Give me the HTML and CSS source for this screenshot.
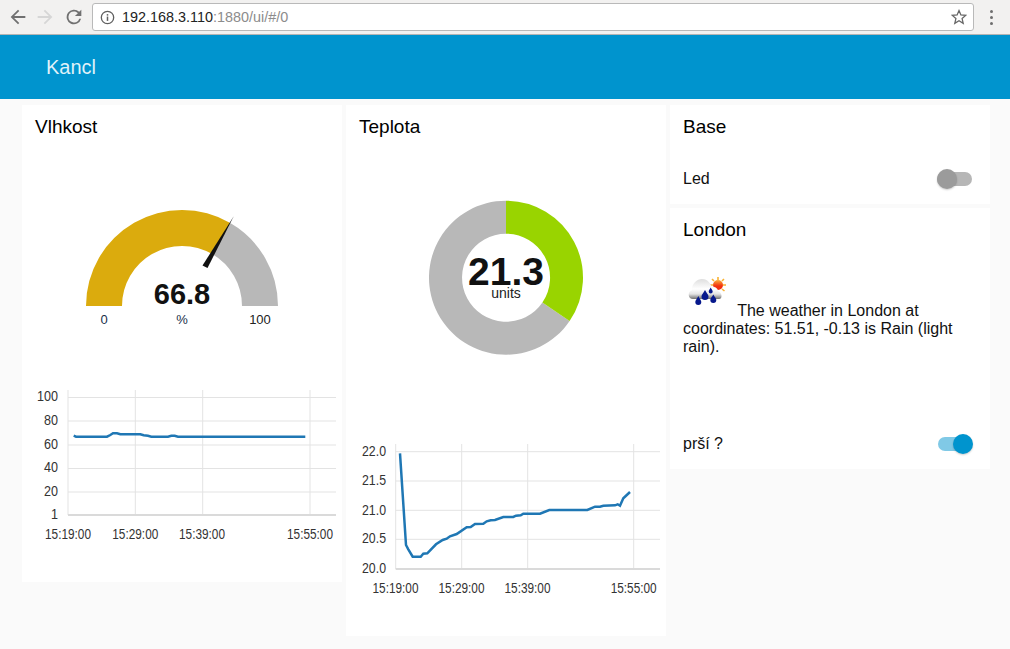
FILE: index.html
```html
<!DOCTYPE html>
<html lang="cs">
<head>
  <meta charset="UTF-8">
  <meta name="viewport" content="width=device-width, initial-scale=1.0">
  <title>Kancl</title>
  <link rel="stylesheet" href="styles.css">
</head>
<body>
  <div class="toolbar">
    <svg class="nav-icon" viewBox="0 0 24 24"><path class="ico-dark" d="M20 11H7.8l5.6-5.6L12 4l-8 8 8 8 1.4-1.4L7.8 13H20z"/></svg>
    <svg class="nav-icon" viewBox="0 0 24 24"><path class="ico-faint" d="M4 11h12.2l-5.6-5.6L12 4l8 8-8 8-1.4-1.4 5.6-5.6H4z"/></svg>
    <svg class="nav-icon" viewBox="0 0 24 24"><path class="ico-dark" d="M17.65 6.35A8 8 0 1 0 19.73 14h-2.08A6 6 0 1 1 12 6c1.66 0 3.14.69 4.22 1.78L13 11h7V4z"/></svg>
    <div class="urlbar">
      <svg class="info-icon" viewBox="0 0 16 16">
        <circle cx="8" cy="8" r="6.6" fill="none" stroke="#5f5f5f" stroke-width="1.4"/>
        <rect x="7.2" y="7" width="1.6" height="4.6" fill="#5f5f5f"/>
        <rect x="7.2" y="4.4" width="1.6" height="1.6" fill="#5f5f5f"/>
      </svg>
      <span class="url"><span class="url-host">192.168.3.110</span>:1880/ui/#/0</span>
      <svg class="star-icon" viewBox="0 0 16 16"><path d="M8 1.6l1.9 4.4 4.8.4-3.6 3.2 1.1 4.7L8 11.8l-4.2 2.5 1.1-4.7-3.6-3.2 4.8-.4z" fill="none" stroke="#666" stroke-width="1.3"/></svg>
    </div>
    <div class="menu-dots"><i></i><i></i><i></i></div>
  </div>

  <header class="header">Kancl</header>

  <main class="dashboard">
    <section class="card">
      <h2 class="card-title">Vlhkost</h2>
      <svg class="plot plot-gauge1" viewBox="22 149 320 231">
        <path class="gold" d="M86 306A96 96 0 0 1 230.3 223L212.2 254.1A60 60 0 0 0 122 306Z"/>
        <path class="gray" d="M230.3 223A96 96 0 0 1 278 306H242A60 60 0 0 0 212.2 254.1Z"/>
        <path class="needle" d="M202.500 265.500L207.500 268L233.600 216.600Z"/>
        <text class="gauge-value" x="182" y="304">66.8</text>
        <text class="gauge-label navy" x="104" y="324">0</text>
        <text class="gauge-label navy" x="182" y="324">%</text>
        <text class="gauge-label" x="260" y="324">100</text>
      </svg>
      <svg class="plot plot-chart1" viewBox="22 380 320 202">
        <path class="grid" d="M68 397.5H336M68 421H336M68 445H336M68 468.500H336M68 492H336M68 390V515M135.300 390V515M202.700 390V515M310 390V515"/>
        <path class="axis" d="M68 515H336"/>
        <polyline class="series" points="73.700,435.700 76,436.700 107,436.700 110.300,435 113,433.300 117,433.300 120.300,434.300 140.300,434.300 143.700,435.300 148,435.700 151.300,436.700 168,436.700 171.300,435.700 174.700,435.700 178,436.700 305.300,436.700"/>
        <text class="tick-y" x="58" y="401" textLength="21" lengthAdjust="spacingAndGlyphs">100</text>
        <text class="tick-y" x="58" y="425" textLength="14" lengthAdjust="spacingAndGlyphs">80</text>
        <text class="tick-y" x="58" y="449" textLength="14" lengthAdjust="spacingAndGlyphs">60</text>
        <text class="tick-y" x="58" y="472" textLength="14" lengthAdjust="spacingAndGlyphs">40</text>
        <text class="tick-y" x="58" y="496" textLength="14" lengthAdjust="spacingAndGlyphs">20</text>
        <text class="tick-y" x="58" y="519" textLength="7" lengthAdjust="spacingAndGlyphs">1</text>
        <text class="tick-x" x="68" y="539" textLength="46" lengthAdjust="spacingAndGlyphs">15:19:00</text>
        <text class="tick-x" x="135.300" y="539" textLength="46" lengthAdjust="spacingAndGlyphs">15:29:00</text>
        <text class="tick-x" x="202" y="539" textLength="46" lengthAdjust="spacingAndGlyphs">15:39:00</text>
        <text class="tick-x" x="310" y="539" textLength="46" lengthAdjust="spacingAndGlyphs">15:55:00</text>
      </svg>
    </section>

    <section class="card">
      <h2 class="card-title">Teplota</h2>
      <svg class="plot plot-gauge2" viewBox="346 149 320 281">
        <path class="gray" d="M506 200.700A77 77 0 1 0 569.600 321.100L542.400 302.500A44 44 0 1 1 506 233.700Z"/>
        <path class="green" d="M506 200.700A77 77 0 0 1 569.600 321.100L542.400 302.500A44 44 0 0 0 506 233.700Z"/>
        <text class="donut-value" x="506" y="285">21.3</text>
        <text class="donut-unit" x="506" y="298">units</text>
      </svg>
      <svg class="plot plot-chart2" viewBox="346 430 320 206">
        <path class="grid" d="M395.700 451.700H660M395.700 481H660M395.700 510.300H660M395.700 539.300H660M395.700 444V569M461.700 444V569M527.700 444V569M633.700 444V569"/>
        <path class="axis" d="M395.700 569H660"/>
        <polyline class="series" points="400,453.300 406,545 408.300,549.300 412.700,556.700 420.700,556.700 423.300,553.700 427.300,553.300 436,544.300 442.700,540 446.700,538.700 450,536.300 456.700,534 466.700,527.300 470.700,527 475,524 483.300,523.700 486.700,521.300 490.700,520.300 495,520 503.300,517 513.300,517 516,515.700 520.700,515.300 523.300,513.700 540,513.700 549.300,510 587.300,510 595,506.700 600,506.700 603.300,505.700 615,505.300 617.700,504.300 620,505.700 623.300,498.300 630,492"/>
        <text class="tick-y" x="386" y="456" textLength="24" lengthAdjust="spacingAndGlyphs">22.0</text>
        <text class="tick-y" x="386" y="485" textLength="24" lengthAdjust="spacingAndGlyphs">21.5</text>
        <text class="tick-y" x="386" y="514.500" textLength="24" lengthAdjust="spacingAndGlyphs">21.0</text>
        <text class="tick-y" x="386" y="543" textLength="24" lengthAdjust="spacingAndGlyphs">20.5</text>
        <text class="tick-y" x="386" y="573" textLength="24" lengthAdjust="spacingAndGlyphs">20.0</text>
        <text class="tick-x" x="395.500" y="593" textLength="46" lengthAdjust="spacingAndGlyphs">15:19:00</text>
        <text class="tick-x" x="461.500" y="593" textLength="46" lengthAdjust="spacingAndGlyphs">15:29:00</text>
        <text class="tick-x" x="527.500" y="593" textLength="46" lengthAdjust="spacingAndGlyphs">15:39:00</text>
        <text class="tick-x" x="633.700" y="593" textLength="46" lengthAdjust="spacingAndGlyphs">15:55:00</text>
      </svg>
    </section>

    <div class="stack">
      <section class="card card-base">
        <h2 class="card-title">Base</h2>
        <div class="row">
          <span>Led</span>
          <span class="switch"></span>
        </div>
      </section>

      <section class="card card-london">
        <h2 class="card-title">London</h2>
        <p class="weather">
          <svg class="weather-icon" viewBox="0 0 50 50">
            <defs>
              <linearGradient id="cloudFill" x1="0" y1="0" x2="0" y2="1">
                <stop offset="0" stop-color="#dedede"/>
                <stop offset="0.5" stop-color="#fff"/>
                <stop offset="0.75" stop-color="#e4e4e4"/>
                <stop offset="1" stop-color="#6f6f6f"/>
              </linearGradient>
              <linearGradient id="sunFill" x1="0" y1="0" x2="0" y2="1">
                <stop offset="0" stop-color="#fbb03b"/>
                <stop offset="0.6" stop-color="#f2300f"/>
              </linearGradient>
            </defs>
            <g stroke="#f9b233" stroke-width="1.6">
              <path d="M35 11V14M27 19H30M43 19H40M29 13L31 15M41 13L39 15M41.500 25L39 23"/>
            </g>
            <circle cx="35" cy="19" r="5" fill="url(#sunFill)"/>
            <path d="M10 33C5 33 4 26 9 24 9 17 14 13 19 13 25 13 28 18 28.500 21 32 20 35 23 35 25 39 26 40 33 36 33Z" fill="url(#cloudFill)"/>
            <path class="drop" d="M15.300 30C14 33 12.300 34 12.300 36A3 3 0 0 0 18.300 36C18.300 34 16.600 33 15.300 30Z"/>
            <path class="drop" d="M22 24C20.500 27 18.500 28.500 18.500 30.500A3.500 3.500 0 0 0 25.500 30.500C25.500 28.500 23.500 27 22 24Z"/>
            <path class="drop" d="M27.700 21.500C26.800 23.500 25.700 24.300 25.700 25.500A2 2 0 0 0 29.700 25.500C29.700 24.300 28.600 23.500 27.700 21.500Z"/>
            <path class="drop" d="M30.300 28.500C29 31 27.300 32.300 27.300 34A3 3 0 0 0 33.300 34C33.300 32.300 31.600 31 30.300 28.500Z"/>
          </svg>
          The weather in London at coordinates: 51.51, -0.13 is Rain (light rain).
        </p>
        <div class="row row-rain">
          <span>prší ?</span>
          <span class="switch switch-on"></span>
        </div>
      </section>
    </div>
  </main>
</body>
</html>
```

FILE: styles.css
```css
html, body {
  height: 100%;
}
body {
  margin: 0;
  background: #fafafa;
  font-family: "Liberation Sans", Arial, sans-serif;
  color: #111;
  overflow: hidden;
}

/* browser chrome */
.toolbar {
  display: flex;
  align-items: center;
  height: 34px;
  padding-left: 7px;
  background: #f2f1f0;
  border-bottom: 1px solid #b4b4b4;
}
.nav-icon {
  width: 22px;
  height: 22px;
  margin-right: 5px;
}
.nav-icon:nth-child(2) {
  margin-right: 7px;
}
.nav-icon:nth-child(3) {
  margin-right: 0;
}
.ico-dark {
  fill: #707070;
}
.ico-faint {
  fill: #d6d6d6;
}
.urlbar {
  display: flex;
  align-items: center;
  width: 882px;
  height: 28px;
  margin-left: 7px;
  box-sizing: border-box;
  padding: 0 6px 0 7px;
  background: #fff;
  border: 1px solid #b9b9b9;
  border-radius: 3px;
}
.info-icon {
  width: 15px;
  height: 15px;
}
.url {
  margin-left: 7px;
  font-size: 14.4px;
  color: #8c8c8c;
  flex: 1;
}
.url-host {
  color: #222;
}
.star-icon {
  width: 16px;
  height: 16px;
}
.menu-dots {
  display: flex;
  flex-direction: column;
  gap: 3px;
  margin-left: 16px;
}
.menu-dots i {
  display: block;
  width: 3px;
  height: 3px;
  border-radius: 50%;
  background: #6e6e6e;
}

.header {
  height: 64px;
  line-height: 64px;
  padding-left: 46px;
  background: #0094ce;
  color: #dff1f9;
  font-size: 20px;
}

/* dashboard */
.dashboard {
  display: flex;
  align-items: flex-start;
  gap: 4px;
  padding: 6px 20px 0 22px;
}
.card {
  width: 320px;
  background: #fff;
}
.card-title {
  margin: 0;
  height: 44px;
  line-height: 44px;
  padding-left: 13px;
  font-size: 19px;
  font-weight: normal;
  color: #000;
}
.stack {
  display: flex;
  flex-direction: column;
  gap: 4px;
}
.card-base {
  height: 99px;
}
.card-london {
  height: 261px;
}
.row {
  display: flex;
  align-items: center;
  justify-content: space-between;
  height: 50px;
  margin-top: 5px;
  padding: 0 18px 0 13px;
  font-size: 16px;
}
.row-rain {
  margin-top: 63px;
}
.weather {
  margin: 0;
  padding: 14px 13px 0;
  font-size: 16px;
  line-height: 18px;
}
.weather-icon {
  width: 50px;
  height: 50px;
}
.drop {
  fill: #06188c;
}

.switch {
  position: relative;
  display: block;
  width: 35px;
  height: 14px;
  border-radius: 7px;
  background: #b6b6b6;
}
.switch::after {
  content: "";
  position: absolute;
  left: 0;
  top: -3px;
  width: 20px;
  height: 20px;
  border-radius: 50%;
  background: #9b9b9b;
  box-shadow: 0 1px 2px rgba(0,0,0,0.2);
}
.switch-on {
  width: 34px;
  background: #80c9e6;
}
.switch-on::after {
  left: 15px;
  background: #0094ce;
}

/* gauges and charts */
.plot {
  display: block;
  width: 320px;
}
.plot-gauge1 {
  height: 231px;
}
.plot-chart1 {
  height: 202px;
}
.plot-gauge2 {
  height: 281px;
}
.plot-chart2 {
  height: 206px;
}
.gold {
  fill: #dbab0d;
}
.gray {
  fill: #b8b8b8;
}
.green {
  fill: #99d400;
}
.needle {
  fill: #111;
}
.gauge-value {
  font-size: 29px;
  font-weight: bold;
  text-anchor: middle;
  fill: #111;
}
.gauge-label {
  font-size: 13px;
  text-anchor: middle;
  fill: #222;
}
.navy {
  fill: #1a2f4a;
}
.donut-value {
  font-size: 39px;
  font-weight: bold;
  text-anchor: middle;
  fill: #111;
}
.donut-unit {
  font-size: 14px;
  text-anchor: middle;
  fill: #222;
}
.grid {
  fill: none;
  stroke: #e3e3e3;
  stroke-width: 1;
}
.axis {
  fill: none;
  stroke: #dadada;
  stroke-width: 2;
}
.series {
  fill: none;
  stroke: #1f77b4;
  stroke-width: 2.5;
}
.tick-y {
  font-size: 14px;
  text-anchor: end;
  fill: #333;
}
.tick-x {
  font-size: 14px;
  text-anchor: middle;
  fill: #333;
}
```
